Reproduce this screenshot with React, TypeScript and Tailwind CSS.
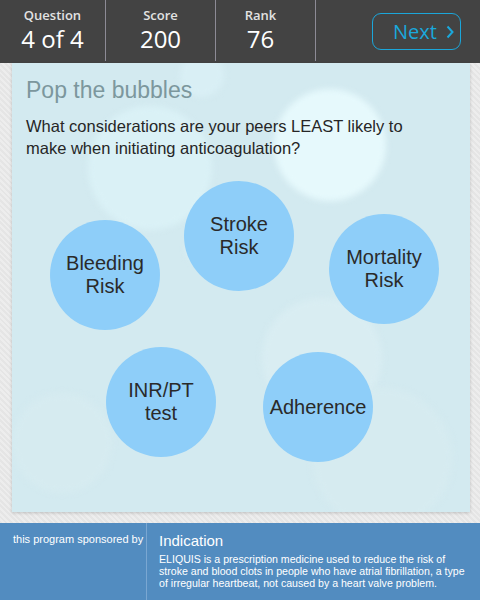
import * as React from 'react';

type Bubble = { label: string[]; x: number; y: number };

// bubble centres, relative to the panel
const bubbles: Bubble[] = [
  { label: ['Bleeding', 'Risk'], x: 93, y: 212 },
  { label: ['Stroke', 'Risk'], x: 227, y: 173 },
  { label: ['Mortality', 'Risk'], x: 372, y: 206 },
  { label: ['INR/PT', 'test'], x: 149, y: 339 },
  { label: ['Adherence'], x: 306, y: 344 },
];

// soft background bubbles (decoration)
const glows = [
  { x: 318, y: 82, r: 56, c: 'bg-[#e6f9fc]' },
  { x: 138, y: 105, r: 62, c: 'bg-[#daf1f6]' },
  { x: 190, y: 12, r: 22, c: 'bg-[#d9eff5]' },
  { x: 188, y: 186, r: 14, c: 'bg-[#d9eef4]' },
  { x: 310, y: 295, r: 60, c: 'bg-[#d9edf2]' },
  { x: 370, y: 395, r: 70, c: 'bg-[#d6ebf0]' },
  { x: 50, y: 380, r: 50, c: 'bg-[#d6ebf0]' },
];

function Stat({ label, value, className }: { label: string; value: string; className: string }) {
  return (
    <div className={`flex flex-col items-center pt-[7px] ${className}`}>
      <span className="text-[13px] font-semibold text-[#e2e2e2] leading-[16px]">{label}</span>
      <span className="text-[24px] text-white leading-[26px] mt-[3px]">{value}</span>
    </div>
  );
}

export default function App() {
  return (
    <div
      className="w-[480px] h-[600px] flex flex-col bg-[repeating-linear-gradient(45deg,#ededed_0px,#ededed_2px,#e5e5e5_2px,#e5e5e5_4px)] overflow-hidden"
      style={{ fontFamily: '"Liberation Sans", Arial, sans-serif' }}
    >
      {/* Header */}
      <div className="h-[63px] bg-[#434343] flex shrink-0" style={{ fontFamily: '"Open Sans", "Liberation Sans", sans-serif' }}>
        <Stat label="Question" value="4 of 4" className="w-[106px] border-r border-[#8d8b96] mb-[2px]" />
        <Stat label="Score" value="200" className="w-[110px] border-r border-[#8d8b96] mb-[2px]" />
        <Stat label="Rank" value="76" className="w-[100px] pr-[10px] border-r border-[#8d8b96] mb-[2px]" />
        <div className="flex-1 flex items-start justify-end pr-[19px] pt-[13px]">
          <button className="w-[89px] h-[37px] rounded-[9px] border border-[#1ba6da] text-[#1aa8dc] text-[20px] flex items-center pl-[20px] gap-[9px]">
            Next
            <svg width="8" height="14" viewBox="0 0 8 14" fill="none">
              <path d="M1.5 1.5 L6.5 7 L1.5 12.5" stroke="#1aa8dc" strokeWidth="2" />
            </svg>
          </button>
        </div>
      </div>

      {/* Quiz panel */}
      <div className="pl-[12px] shrink-0">
        <div className="relative w-[458px] h-[449px] bg-[#d3eaf0] overflow-hidden shadow-[0_1px_3px_rgba(0,0,0,0.18)]">
          {glows.map((g, i) => (
            <div
              key={i}
              className={`absolute rounded-full blur-[3px] ${g.c}`}
              style={{ left: g.x - g.r, top: g.y - g.r, width: g.r * 2, height: g.r * 2 }}
            />
          ))}

          <div className="relative px-[14px] pt-[13px]">
            <h1 className="text-[23px] text-[#7c979d] leading-[28px]">Pop the bubbles</h1>
            <p className="mt-[11px] text-[16.5px] leading-[22px] text-[#262626] w-[420px]">
              What considerations are your peers LEAST likely to make when initiating anticoagulation?
            </p>
          </div>

          {bubbles.map((b) => (
            <div
              key={b.label.join(' ')}
              className="absolute w-[110px] h-[110px] rounded-full bg-[#8ecef9] flex flex-col items-center justify-center text-[20px] leading-[23px] text-[#2a2a2a] text-center"
              style={{ left: b.x - 55, top: b.y - 55 }}
            >
              {b.label.map((l) => (
                <span key={l}>{l}</span>
              ))}
            </div>
          ))}
        </div>
      </div>

      {/* Footer */}
      <div className="mt-auto h-[77px] bg-[#528cc0] flex text-white">
        <div className="w-[147px] border-r border-[#7aa7d2] pl-[13px] pt-[9px] text-[11px] leading-[14px]">
          this program sponsored by
        </div>
        <div className="flex-1 pl-[12px] pr-[12px] pt-[9px]">
          <div className="text-[15px] leading-[18px]">Indication</div>
          <p className="mt-[3px] text-[10.6px] leading-[12px]">
            ELIQUIS is a prescription medicine used to reduce the risk of stroke and blood clots in people who have
            atrial fibrillation, a type of irregular heartbeat, not caused by a heart valve problem.
          </p>
        </div>
      </div>
    </div>
  );
}
